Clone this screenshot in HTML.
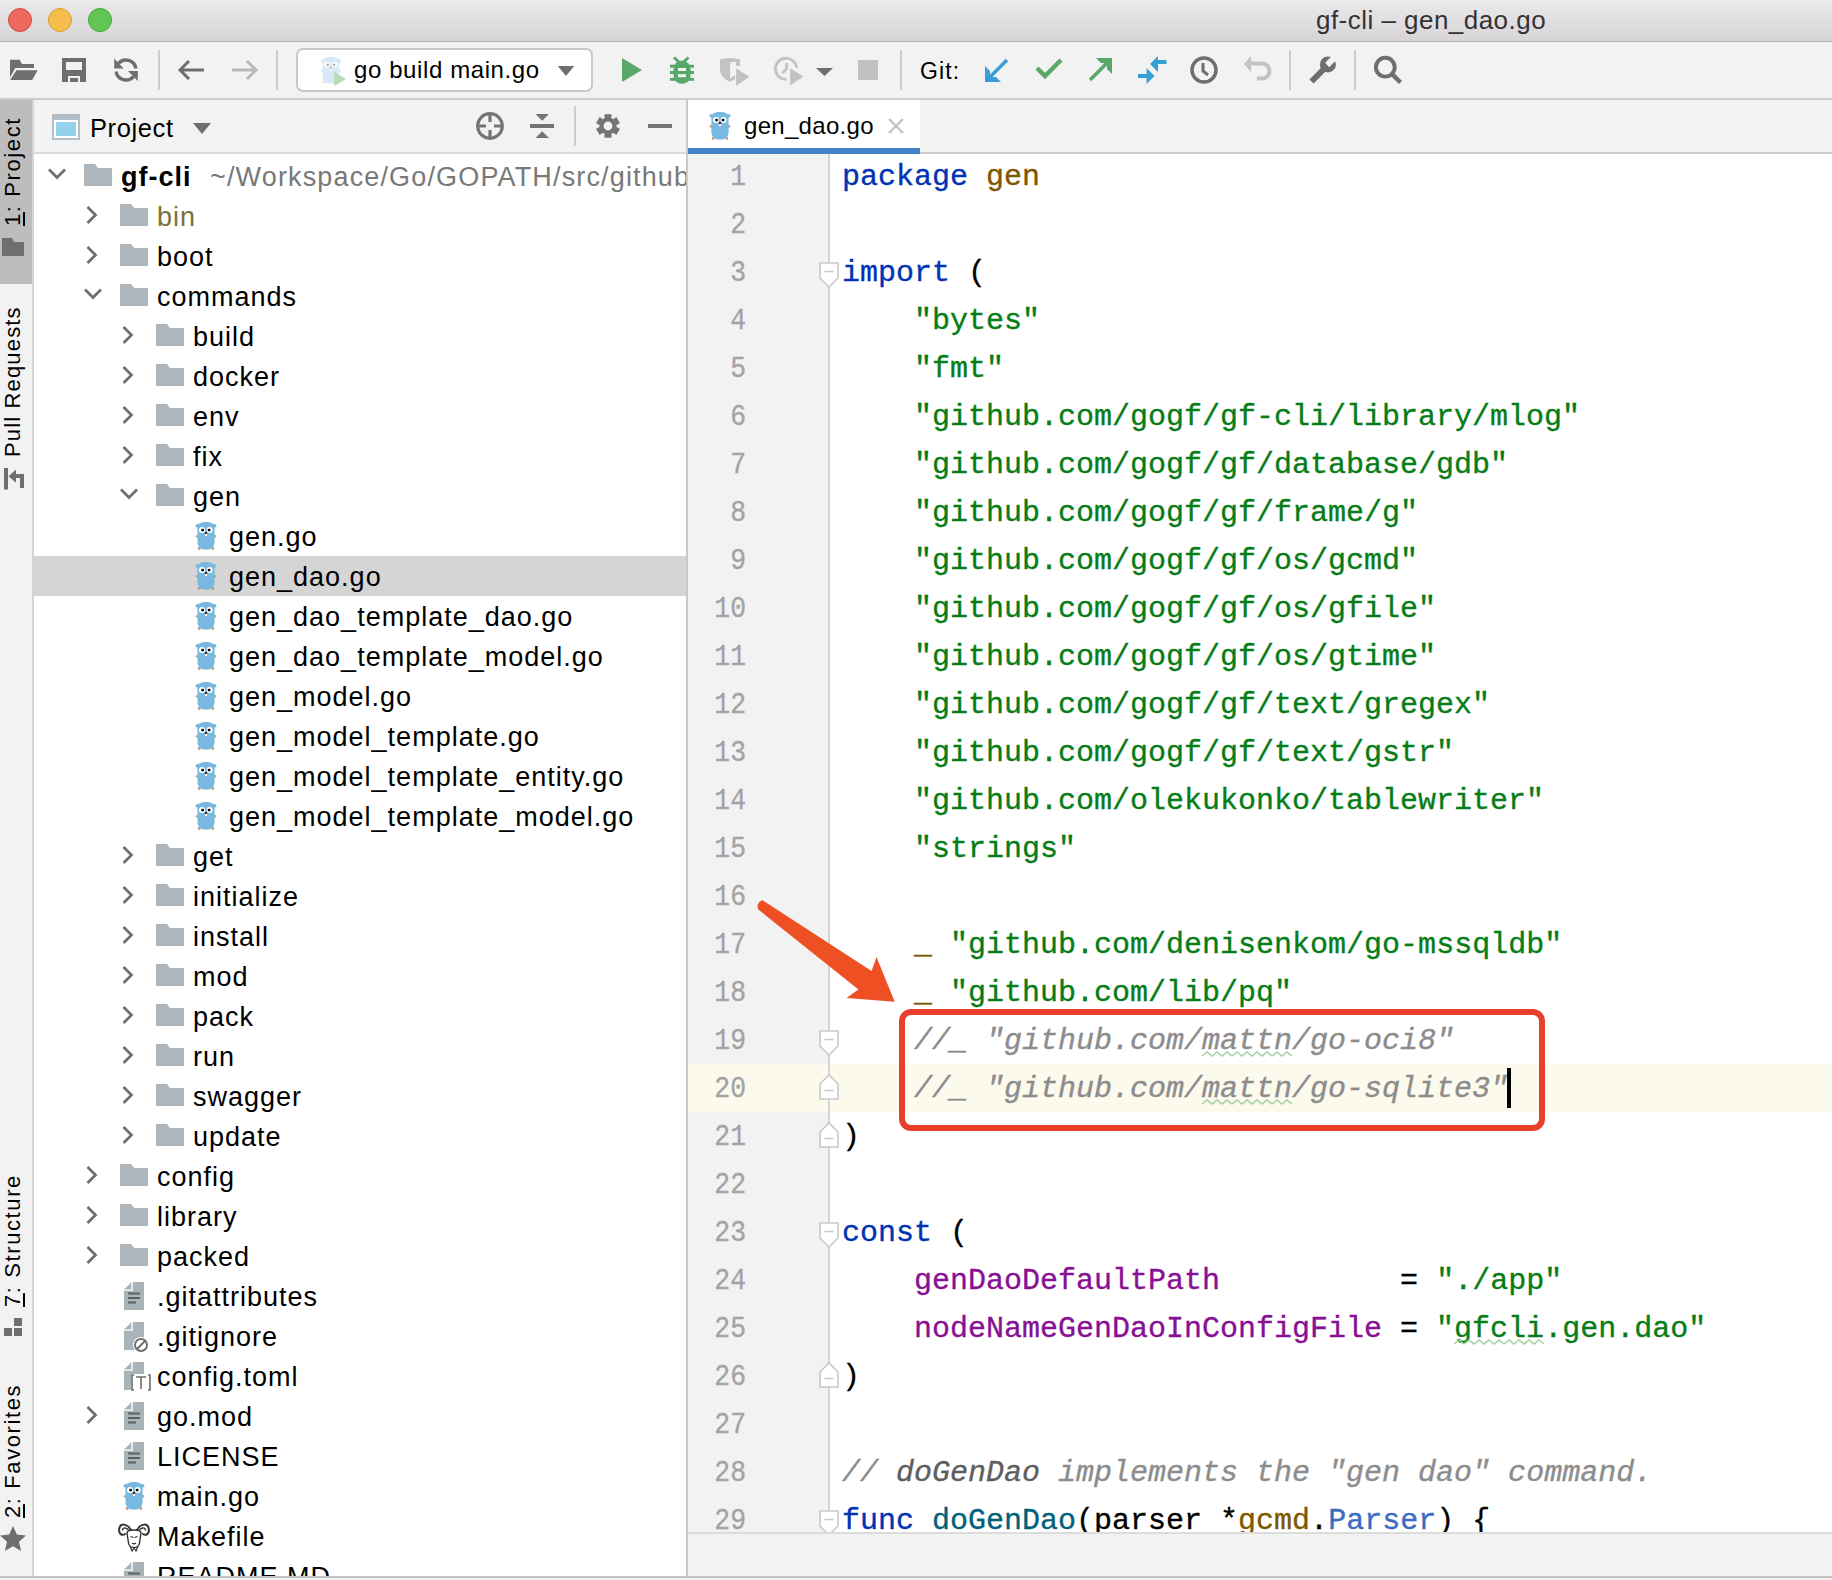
<!DOCTYPE html><html><head><meta charset="utf-8"><style>
*{box-sizing:border-box;margin:0;padding:0}
html,body{width:1832px;height:1580px;overflow:hidden;background:#f2f2f2;font-family:"Liberation Sans",sans-serif}
.a{position:absolute}
.ui{font-family:"Liberation Sans",sans-serif;white-space:pre}
.code{font-family:"Liberation Mono",monospace;font-size:30px;white-space:pre;line-height:48px;-webkit-text-stroke-width:0.35px}
.kw{color:#0033b3}.str{color:#067d17}.pkg{color:#7f5700}.cm{color:#8c8c8c;font-style:italic}
.cn{color:#871094}.fn{color:#00627a}.ty{color:#3a6cc2}
svg{position:absolute;overflow:visible}
</style></head><body>
<div class="a" style="left:0;top:0;width:1832px;height:41px;background:linear-gradient(#ebe9eb,#d6d4d6)"></div>
<div class="a" style="left:0;top:41px;width:1832px;height:1px;background:#b4b2b4"></div>
<div class="a" style="left:8px;top:8px;width:24px;height:24px;border-radius:50%;background:#ee6a5e;border:1px solid #d8473b"></div>
<div class="a" style="left:48px;top:8px;width:24px;height:24px;border-radius:50%;background:#f6be4f;border:1px solid #d99e2c"></div>
<div class="a" style="left:88px;top:8px;width:24px;height:24px;border-radius:50%;background:#62c655;border:1px solid #3ea934"></div>
<div class="a ui" style="left:1316px;top:5px;font-size:26px;color:#333;line-height:30px;letter-spacing:0.47px">gf-cli – gen_dao.go</div>
<div class="a" style="left:0;top:98px;width:1832px;height:2px;background:#cdcdcd"></div>
<div class="a" style="left:158px;top:50px;width:2px;height:40px;background:#cbcbcb"></div>
<div class="a" style="left:276px;top:50px;width:2px;height:40px;background:#cbcbcb"></div>
<div class="a" style="left:900px;top:50px;width:2px;height:40px;background:#cbcbcb"></div>
<div class="a" style="left:1289px;top:50px;width:2px;height:40px;background:#cbcbcb"></div>
<div class="a" style="left:1354px;top:50px;width:2px;height:40px;background:#cbcbcb"></div>
<svg style="left:10px;top:58px" width="30" height="24" viewBox="0 0 30 24"><path d="M0 1.8h9.5l2.5 4.2H24V10H5.2L0 19.5z" fill="#6e6e6e"/><path d="M6.4 12.3H27.7L22.2 22H0.2z" fill="#6e6e6e"/></svg>
<svg style="left:62px;top:58px" width="24" height="24" viewBox="0 0 24 24"><path fill-rule="evenodd" d="M0 0h24v24H0z M4 4v8h16V4z M6 18v6h12v-6z" fill="#6e6e6e"/><rect x="8" y="20" width="8" height="4" fill="#6e6e6e"/></svg>
<svg style="left:114px;top:58px" width="24" height="24" viewBox="0 0 24 24"><path d="M4.45 5.44A10 10 0 0 1 21.9 10.6" stroke="#6e6e6e" stroke-width="3.4" fill="none"/><path d="M19.55 18.56A10 10 0 0 1 2.1 13.4" stroke="#6e6e6e" stroke-width="3.4" fill="none"/><path d="M0.2 0.6v10h9.5z" fill="#6e6e6e"/><path d="M23.8 22.9V13.1H14z" fill="#6e6e6e"/></svg>
<svg style="left:178px;top:60px" width="26" height="20" viewBox="0 0 26 20"><path d="M26 10H3 M11 1L2 10l9 9" stroke="#6e6e6e" stroke-width="3" fill="none"/></svg>
<svg style="left:232px;top:60px" width="26" height="20" viewBox="0 0 26 20"><path d="M0 10h23 M15 1l9 9-9 9" stroke="#b9b9b9" stroke-width="3" fill="none"/></svg>
<div class="a" style="left:296px;top:48px;width:297px;height:44px;background:#fff;border:2px solid #c9c9c9;border-radius:7px"></div>
<div class="a ui" style="left:354px;top:55px;font-size:24px;color:#000;line-height:30px;letter-spacing:0.6px">go build main.go</div>
<svg style="left:557px;top:66px" width="18" height="10" viewBox="0 0 18 11"><path d="M0 0h18L9 11z" fill="#6e6e6e"/></svg>
<svg style="left:320px;top:56px;opacity:0.3" width="22" height="28" viewBox="0 0 22 29"><g fill="#c49a86"><circle cx="2.1" cy="15.3" r="1.4"/><circle cx="19.9" cy="15.3" r="1.4"/><circle cx="4.2" cy="27.3" r="1.5"/><circle cx="17.8" cy="27.3" r="1.5"/></g><circle cx="2.4" cy="4.8" r="1.9" fill="#78b9e2"/><circle cx="19.6" cy="4.8" r="1.9" fill="#78b9e2"/><path d="M2.4 6.5C2.4 2.5 6 0.9 11 0.9S19.6 2.5 19.6 6.5V20.5C19.6 26 16 28.7 11 28.7S2.4 26 2.4 20.5z" fill="#78b9e2"/><circle cx="7" cy="9" r="3" fill="#fff"/><circle cx="14.6" cy="9" r="3" fill="#fff"/><circle cx="7.6" cy="9.1" r="1.45" fill="#000"/><circle cx="14.1" cy="9.1" r="1.45" fill="#000"/><ellipse cx="11" cy="12.6" rx="1.9" ry="1.5" fill="#d7b7a6"/><ellipse cx="11" cy="11.9" rx="1.3" ry="1" fill="#1e1e1e"/><rect x="10" y="13.4" width="2" height="1.8" fill="#fff"/></svg>
<svg style="left:334px;top:72px" width="12" height="14" viewBox="0 0 12 14"><path d="M0 0l12 7-12 7z" fill="#b5dcb5"/></svg>
<svg style="left:622px;top:58px" width="20" height="24" viewBox="0 0 20 24"><path d="M0 0l20 12L0 24z" fill="#59a869"/></svg>
<svg style="left:668px;top:56px" width="28" height="30" viewBox="0 0 28 30"><path d="M6 1.5l6.5 6M20.5 1.5L14 7.5" stroke="#59a869" stroke-width="3"/><rect x="5.4" y="4.4" width="17.2" height="23.4" rx="8.6" ry="9" fill="#59a869"/><rect x="2" y="8.7" width="24" height="3" fill="#59a869"/><rect x="2" y="15" width="24" height="3" fill="#59a869"/><rect x="2" y="21.8" width="24" height="3" fill="#59a869"/><rect x="10" y="12" width="8" height="3" fill="#f2f2f2"/><rect x="10" y="18.2" width="8" height="3" fill="#f2f2f2"/></svg>
<svg style="left:719px;top:56px" width="32" height="32" viewBox="0 0 32 32"><path d="M1 3.5Q11 0.5 21 3.5V9.8H17V5.8L11.1 6.2V22.4L16 19V23.3L11 25.7Q2 22 1 14z" fill="#c2c2c2"/><path d="M17.1 12.3L30.2 20.7L17.1 29.8z" fill="#c2c2c2"/></svg>
<svg style="left:774px;top:56px" width="32" height="32" viewBox="0 0 32 32"><path d="M12.6 23.4A10.6 10.6 0 1 1 22.56 11.88" stroke="#c2c2c2" stroke-width="2.8" fill="none"/><path d="M12.6 7.1V12.8L8.5 17.1" stroke="#c2c2c2" stroke-width="2.8" fill="none"/><path d="M16.1 12.3L29.4 20.6L16.1 29.6z" fill="#c2c2c2"/></svg>
<svg style="left:815.5px;top:68px" width="17" height="8" viewBox="0 0 17 8"><path d="M0 0h17L8.5 8z" fill="#6e6e6e"/></svg>
<div class="a" style="left:858px;top:60px;width:20px;height:20px;background:#c2c2c2"></div>
<div class="a ui" style="left:920px;top:56px;font-size:23px;color:#000;line-height:30px;letter-spacing:1.1px">Git:</div>
<svg style="left:985px;top:58px" width="24" height="24" viewBox="0 0 24 24"><path d="M22 2L5 19" stroke="#389fd6" stroke-width="3.5"/><path d="M0 8v16h16l-5-5H5v-6z" fill="#389fd6"/></svg>
<svg style="left:1035px;top:57px" width="28" height="22" viewBox="0 0 28 22"><path d="M2 11l8 8L26 3" stroke="#59a869" stroke-width="4.5" fill="none"/></svg>
<svg style="left:1088px;top:58px" width="24" height="24" viewBox="0 0 24 24"><path d="M2 22L19 5" stroke="#59a869" stroke-width="3.5"/><path d="M8 0h16v16l-5-5V5h-6z" fill="#59a869"/></svg>
<svg style="left:1138px;top:56px" width="30" height="30" viewBox="0 0 30 30"><path d="M19 6h9.5" stroke="#389fd6" stroke-width="4"/><path d="M12 8l8-8v16z" fill="#389fd6"/><path d="M0 20h9.5" stroke="#389fd6" stroke-width="4"/><path d="M16.5 20l-8-8v16z" fill="#389fd6"/></svg>
<svg style="left:1190px;top:56px" width="28" height="28" viewBox="0 0 28 28"><circle cx="14" cy="14" r="12" stroke="#6e6e6e" stroke-width="3.5" fill="none"/><path d="M13 7v8l5 4" stroke="#6e6e6e" stroke-width="3" fill="none"/></svg>
<svg style="left:1244px;top:56px" width="28" height="26" viewBox="0 0 28 26"><path d="M6 7.5h12a7.5 7.5 0 0 1 0 15h-5" stroke="#c2c2c2" stroke-width="4" fill="none"/><path d="M0 8l7-8v16z" fill="#c2c2c2"/></svg>
<svg style="left:1309px;top:56px" width="30" height="30" viewBox="0 0 30 30"><path d="M2.5 25.5L15 13" stroke="#6e6e6e" stroke-width="6"/><circle cx="18.9" cy="8.4" r="8" fill="#6e6e6e"/><path d="M16.2 6.7L26.2 -3.3L30.1 1.2L20.1 11.2z" fill="#f2f2f2"/></svg>
<svg style="left:1374px;top:57px" width="30" height="30" viewBox="0 0 30 30"><circle cx="11.3" cy="10.2" r="9.4" stroke="#6e6e6e" stroke-width="3.9" fill="none"/><path d="M17.5 16.5L26.5 25.5" stroke="#6e6e6e" stroke-width="4.5"/></svg>
<div class="a" style="left:0;top:100px;width:32px;height:1476px;background:#f2f2f2"></div>
<div class="a" style="left:0;top:100px;width:32px;height:184px;background:#bdbdbd"></div>
<div class="a" style="left:32px;top:100px;width:2px;height:1476px;background:#d4d4d4"></div>
<div class="a ui" style="left:1px;top:226px;font-size:22px;line-height:24px;letter-spacing:1.6px;color:#000;transform-origin:0 0;transform:rotate(-90deg)"><u style="text-decoration-thickness:2px;text-underline-offset:3px">1</u>: Project</div>
<div class="a ui" style="left:1px;top:457px;font-size:22px;line-height:24px;letter-spacing:1.15px;color:#000;transform-origin:0 0;transform:rotate(-90deg)">Pull Requests</div>
<div class="a ui" style="left:1px;top:1307px;font-size:22px;line-height:24px;letter-spacing:1.6px;color:#000;transform-origin:0 0;transform:rotate(-90deg)"><u style="text-decoration-thickness:2px;text-underline-offset:3px">7</u>: Structure</div>
<div class="a ui" style="left:1px;top:1518px;font-size:22px;line-height:24px;letter-spacing:1.6px;color:#000;transform-origin:0 0;transform:rotate(-90deg)"><u style="text-decoration-thickness:2px;text-underline-offset:3px">2</u>: Favorites</div>
<svg style="left:2px;top:238px" width="22" height="18" viewBox="0 0 22 18"><path d="M0 0h10l2 4h10v14H0z" fill="#6e6e6e"/></svg>
<svg style="left:4px;top:468px" width="22" height="22" viewBox="0 0 22 22"><rect x="0" y="0" width="4" height="21.5" fill="#6e6e6e"/><path d="M4.6 8.2L12 1.5v13.3z" fill="#6e6e6e"/><path d="M11 8h7v12" stroke="#6e6e6e" stroke-width="4" fill="none"/></svg>
<svg style="left:4px;top:1318px" width="18" height="18" viewBox="0 0 18 18"><rect x="10" y="0" width="8" height="8" fill="#6e6e6e"/><rect x="0" y="10" width="8" height="8" fill="#6e6e6e"/><rect x="10" y="10" width="8" height="8" fill="#6e6e6e"/></svg>
<svg style="left:0px;top:1526px" width="26" height="25" viewBox="0 0 26 25"><path d="M13 0l3.8 8.6 9.2.9-7 6.2 2.1 9.3L13 20.2 4.9 25l2.1-9.3-7-6.2 9.2-.9z" fill="#6e6e6e"/></svg>
<div class="a" style="left:34px;top:100px;width:652px;height:52px;background:#f2f2f2"></div>
<div class="a" style="left:34px;top:152px;width:652px;height:2px;background:#d9d9d9"></div>
<div class="a" style="left:34px;top:154px;width:652px;height:1422px;background:#fff"></div>
<div class="a" style="left:686px;top:100px;width:2px;height:1476px;background:#c9c9c9"></div>
<div class="a" style="left:52px;top:114px;width:28px;height:26px;background:#b3bec6"></div>
<div class="a" style="left:54px;top:120px;width:24px;height:18px;background:#fff"></div>
<div class="a" style="left:56px;top:122px;width:20px;height:14px;background:#94d1ea"></div>
<div class="a ui" style="left:90px;top:112.5px;font-size:25.5px;line-height:30px;color:#000;letter-spacing:0.6px">Project</div>
<svg style="left:193px;top:123px" width="18" height="11" viewBox="0 0 18 11"><path d="M0 0h18L9 11z" fill="#6e6e6e"/></svg>
<svg style="left:476px;top:112px" width="28" height="28" viewBox="0 0 28 28"><circle cx="14" cy="14" r="12.3" stroke="#747474" stroke-width="3.2" fill="none"/><path d="M14 2v8M14 18v8M2 14h8M18 14h8" stroke="#747474" stroke-width="3.2"/></svg>
<svg style="left:530px;top:113px" width="24" height="26" viewBox="0 0 24 26"><path d="M0 13h24" stroke="#747474" stroke-width="4"/><path d="M5.5 1h13.5l-6.75 6.7z M5.5 25h13.5l-6.75-6.7z" fill="#747474"/></svg>
<div class="a" style="left:574px;top:106px;width:2px;height:40px;background:#cbcbcb"></div>
<svg style="left:594px;top:112px" width="28" height="28" viewBox="0 0 28 28"><path fill="#747474" fill-rule="evenodd" d="M10.40 2.24 L17.60 2.24 L17.36 6.08 L19.18 7.13 L22.39 5.00 L25.98 11.23 L22.54 12.95 L22.54 15.05 L25.98 16.77 L22.39 23.00 L19.18 20.87 L17.36 21.92 L17.60 25.76 L10.40 25.76 L10.64 21.92 L8.82 20.87 L5.61 23.00 L2.02 16.77 L5.46 15.05 L5.46 12.95 L2.02 11.23 L5.61 5.00 L8.82 7.13 L10.64 6.08z M18.4 14a4.4 4.4 0 1 0 -8.8 0a4.4 4.4 0 1 0 8.8 0z"/></svg>
<div class="a" style="left:648px;top:124px;width:24px;height:4px;background:#747474"></div>
<div class="a" style="left:34px;top:154px;width:652px;height:1422px;overflow:hidden">
<svg style="left:13.5px;top:14px" width="18" height="12" viewBox="0 0 18 12"><path d="M1 1.5l8 8 8-8" stroke="#6f6f6f" stroke-width="2.7" fill="none"/></svg>
<svg style="left:50px;top:10px" width="28" height="22" viewBox="0 0 28 22"><path d="M0 0h11l3 4h14v18H0z" fill="#aeb6bd"/></svg>
<div class="a ui" style="left:87px;top:8px;font-size:27px;line-height:30px;color:#000;font-weight:bold;letter-spacing:1px">gf-cli</div>
<div class="a ui" style="left:176px;top:8px;font-size:27px;line-height:30px;color:#787878;letter-spacing:1.15px">~/Workspace/Go/GOPATH/src/github.com/gogf/gf-cli</div>
<svg style="left:52.0px;top:52px" width="12" height="18" viewBox="0 0 12 18"><path d="M1.5 1l8 8-8 8" stroke="#6f6f6f" stroke-width="2.7" fill="none"/></svg>
<svg style="left:86px;top:50px" width="28" height="22" viewBox="0 0 28 22"><path d="M0 0h11l3 4h14v18H0z" fill="#aeb6bd"/></svg>
<div class="a ui" style="left:123px;top:48px;font-size:27px;line-height:30px;color:#777236;font-weight:normal;letter-spacing:1px">bin</div>
<svg style="left:52.0px;top:92px" width="12" height="18" viewBox="0 0 12 18"><path d="M1.5 1l8 8-8 8" stroke="#6f6f6f" stroke-width="2.7" fill="none"/></svg>
<svg style="left:86px;top:90px" width="28" height="22" viewBox="0 0 28 22"><path d="M0 0h11l3 4h14v18H0z" fill="#aeb6bd"/></svg>
<div class="a ui" style="left:123px;top:88px;font-size:27px;line-height:30px;color:#000;font-weight:normal;letter-spacing:1px">boot</div>
<svg style="left:49.5px;top:134px" width="18" height="12" viewBox="0 0 18 12"><path d="M1 1.5l8 8 8-8" stroke="#6f6f6f" stroke-width="2.7" fill="none"/></svg>
<svg style="left:86px;top:130px" width="28" height="22" viewBox="0 0 28 22"><path d="M0 0h11l3 4h14v18H0z" fill="#aeb6bd"/></svg>
<div class="a ui" style="left:123px;top:128px;font-size:27px;line-height:30px;color:#000;font-weight:normal;letter-spacing:1px">commands</div>
<svg style="left:88.0px;top:172px" width="12" height="18" viewBox="0 0 12 18"><path d="M1.5 1l8 8-8 8" stroke="#6f6f6f" stroke-width="2.7" fill="none"/></svg>
<svg style="left:122px;top:170px" width="28" height="22" viewBox="0 0 28 22"><path d="M0 0h11l3 4h14v18H0z" fill="#aeb6bd"/></svg>
<div class="a ui" style="left:159px;top:168px;font-size:27px;line-height:30px;color:#000;font-weight:normal;letter-spacing:1px">build</div>
<svg style="left:88.0px;top:212px" width="12" height="18" viewBox="0 0 12 18"><path d="M1.5 1l8 8-8 8" stroke="#6f6f6f" stroke-width="2.7" fill="none"/></svg>
<svg style="left:122px;top:210px" width="28" height="22" viewBox="0 0 28 22"><path d="M0 0h11l3 4h14v18H0z" fill="#aeb6bd"/></svg>
<div class="a ui" style="left:159px;top:208px;font-size:27px;line-height:30px;color:#000;font-weight:normal;letter-spacing:1px">docker</div>
<svg style="left:88.0px;top:252px" width="12" height="18" viewBox="0 0 12 18"><path d="M1.5 1l8 8-8 8" stroke="#6f6f6f" stroke-width="2.7" fill="none"/></svg>
<svg style="left:122px;top:250px" width="28" height="22" viewBox="0 0 28 22"><path d="M0 0h11l3 4h14v18H0z" fill="#aeb6bd"/></svg>
<div class="a ui" style="left:159px;top:248px;font-size:27px;line-height:30px;color:#000;font-weight:normal;letter-spacing:1px">env</div>
<svg style="left:88.0px;top:292px" width="12" height="18" viewBox="0 0 12 18"><path d="M1.5 1l8 8-8 8" stroke="#6f6f6f" stroke-width="2.7" fill="none"/></svg>
<svg style="left:122px;top:290px" width="28" height="22" viewBox="0 0 28 22"><path d="M0 0h11l3 4h14v18H0z" fill="#aeb6bd"/></svg>
<div class="a ui" style="left:159px;top:288px;font-size:27px;line-height:30px;color:#000;font-weight:normal;letter-spacing:1px">fix</div>
<svg style="left:85.5px;top:334px" width="18" height="12" viewBox="0 0 18 12"><path d="M1 1.5l8 8 8-8" stroke="#6f6f6f" stroke-width="2.7" fill="none"/></svg>
<svg style="left:122px;top:330px" width="28" height="22" viewBox="0 0 28 22"><path d="M0 0h11l3 4h14v18H0z" fill="#aeb6bd"/></svg>
<div class="a ui" style="left:159px;top:328px;font-size:27px;line-height:30px;color:#000;font-weight:normal;letter-spacing:1px">gen</div>
<svg style="left:161px;top:367px;opacity:1.0" width="22" height="29" viewBox="0 0 22 29"><g fill="#c49a86"><circle cx="2.1" cy="15.3" r="1.4"/><circle cx="19.9" cy="15.3" r="1.4"/><circle cx="4.2" cy="27.3" r="1.5"/><circle cx="17.8" cy="27.3" r="1.5"/></g><circle cx="2.4" cy="4.8" r="1.9" fill="#78b9e2"/><circle cx="19.6" cy="4.8" r="1.9" fill="#78b9e2"/><path d="M2.4 6.5C2.4 2.5 6 0.9 11 0.9S19.6 2.5 19.6 6.5V20.5C19.6 26 16 28.7 11 28.7S2.4 26 2.4 20.5z" fill="#78b9e2"/><circle cx="7" cy="9" r="3" fill="#fff"/><circle cx="14.6" cy="9" r="3" fill="#fff"/><circle cx="7.6" cy="9.1" r="1.45" fill="#000"/><circle cx="14.1" cy="9.1" r="1.45" fill="#000"/><ellipse cx="11" cy="12.6" rx="1.9" ry="1.5" fill="#d7b7a6"/><ellipse cx="11" cy="11.9" rx="1.3" ry="1" fill="#1e1e1e"/><rect x="10" y="13.4" width="2" height="1.8" fill="#fff"/></svg>
<div class="a ui" style="left:195px;top:368px;font-size:27px;line-height:30px;color:#000;font-weight:normal;letter-spacing:1px">gen.go</div>
<div class="a" style="left:0;top:402px;width:652px;height:40px;background:#d5d5d5"></div>
<svg style="left:161px;top:407px;opacity:1.0" width="22" height="29" viewBox="0 0 22 29"><g fill="#c49a86"><circle cx="2.1" cy="15.3" r="1.4"/><circle cx="19.9" cy="15.3" r="1.4"/><circle cx="4.2" cy="27.3" r="1.5"/><circle cx="17.8" cy="27.3" r="1.5"/></g><circle cx="2.4" cy="4.8" r="1.9" fill="#78b9e2"/><circle cx="19.6" cy="4.8" r="1.9" fill="#78b9e2"/><path d="M2.4 6.5C2.4 2.5 6 0.9 11 0.9S19.6 2.5 19.6 6.5V20.5C19.6 26 16 28.7 11 28.7S2.4 26 2.4 20.5z" fill="#78b9e2"/><circle cx="7" cy="9" r="3" fill="#fff"/><circle cx="14.6" cy="9" r="3" fill="#fff"/><circle cx="7.6" cy="9.1" r="1.45" fill="#000"/><circle cx="14.1" cy="9.1" r="1.45" fill="#000"/><ellipse cx="11" cy="12.6" rx="1.9" ry="1.5" fill="#d7b7a6"/><ellipse cx="11" cy="11.9" rx="1.3" ry="1" fill="#1e1e1e"/><rect x="10" y="13.4" width="2" height="1.8" fill="#fff"/></svg>
<div class="a ui" style="left:195px;top:408px;font-size:27px;line-height:30px;color:#000;font-weight:normal;letter-spacing:1px">gen_dao.go</div>
<svg style="left:161px;top:447px;opacity:1.0" width="22" height="29" viewBox="0 0 22 29"><g fill="#c49a86"><circle cx="2.1" cy="15.3" r="1.4"/><circle cx="19.9" cy="15.3" r="1.4"/><circle cx="4.2" cy="27.3" r="1.5"/><circle cx="17.8" cy="27.3" r="1.5"/></g><circle cx="2.4" cy="4.8" r="1.9" fill="#78b9e2"/><circle cx="19.6" cy="4.8" r="1.9" fill="#78b9e2"/><path d="M2.4 6.5C2.4 2.5 6 0.9 11 0.9S19.6 2.5 19.6 6.5V20.5C19.6 26 16 28.7 11 28.7S2.4 26 2.4 20.5z" fill="#78b9e2"/><circle cx="7" cy="9" r="3" fill="#fff"/><circle cx="14.6" cy="9" r="3" fill="#fff"/><circle cx="7.6" cy="9.1" r="1.45" fill="#000"/><circle cx="14.1" cy="9.1" r="1.45" fill="#000"/><ellipse cx="11" cy="12.6" rx="1.9" ry="1.5" fill="#d7b7a6"/><ellipse cx="11" cy="11.9" rx="1.3" ry="1" fill="#1e1e1e"/><rect x="10" y="13.4" width="2" height="1.8" fill="#fff"/></svg>
<div class="a ui" style="left:195px;top:448px;font-size:27px;line-height:30px;color:#000;font-weight:normal;letter-spacing:1px">gen_dao_template_dao.go</div>
<svg style="left:161px;top:487px;opacity:1.0" width="22" height="29" viewBox="0 0 22 29"><g fill="#c49a86"><circle cx="2.1" cy="15.3" r="1.4"/><circle cx="19.9" cy="15.3" r="1.4"/><circle cx="4.2" cy="27.3" r="1.5"/><circle cx="17.8" cy="27.3" r="1.5"/></g><circle cx="2.4" cy="4.8" r="1.9" fill="#78b9e2"/><circle cx="19.6" cy="4.8" r="1.9" fill="#78b9e2"/><path d="M2.4 6.5C2.4 2.5 6 0.9 11 0.9S19.6 2.5 19.6 6.5V20.5C19.6 26 16 28.7 11 28.7S2.4 26 2.4 20.5z" fill="#78b9e2"/><circle cx="7" cy="9" r="3" fill="#fff"/><circle cx="14.6" cy="9" r="3" fill="#fff"/><circle cx="7.6" cy="9.1" r="1.45" fill="#000"/><circle cx="14.1" cy="9.1" r="1.45" fill="#000"/><ellipse cx="11" cy="12.6" rx="1.9" ry="1.5" fill="#d7b7a6"/><ellipse cx="11" cy="11.9" rx="1.3" ry="1" fill="#1e1e1e"/><rect x="10" y="13.4" width="2" height="1.8" fill="#fff"/></svg>
<div class="a ui" style="left:195px;top:488px;font-size:27px;line-height:30px;color:#000;font-weight:normal;letter-spacing:1px">gen_dao_template_model.go</div>
<svg style="left:161px;top:527px;opacity:1.0" width="22" height="29" viewBox="0 0 22 29"><g fill="#c49a86"><circle cx="2.1" cy="15.3" r="1.4"/><circle cx="19.9" cy="15.3" r="1.4"/><circle cx="4.2" cy="27.3" r="1.5"/><circle cx="17.8" cy="27.3" r="1.5"/></g><circle cx="2.4" cy="4.8" r="1.9" fill="#78b9e2"/><circle cx="19.6" cy="4.8" r="1.9" fill="#78b9e2"/><path d="M2.4 6.5C2.4 2.5 6 0.9 11 0.9S19.6 2.5 19.6 6.5V20.5C19.6 26 16 28.7 11 28.7S2.4 26 2.4 20.5z" fill="#78b9e2"/><circle cx="7" cy="9" r="3" fill="#fff"/><circle cx="14.6" cy="9" r="3" fill="#fff"/><circle cx="7.6" cy="9.1" r="1.45" fill="#000"/><circle cx="14.1" cy="9.1" r="1.45" fill="#000"/><ellipse cx="11" cy="12.6" rx="1.9" ry="1.5" fill="#d7b7a6"/><ellipse cx="11" cy="11.9" rx="1.3" ry="1" fill="#1e1e1e"/><rect x="10" y="13.4" width="2" height="1.8" fill="#fff"/></svg>
<div class="a ui" style="left:195px;top:528px;font-size:27px;line-height:30px;color:#000;font-weight:normal;letter-spacing:1px">gen_model.go</div>
<svg style="left:161px;top:567px;opacity:1.0" width="22" height="29" viewBox="0 0 22 29"><g fill="#c49a86"><circle cx="2.1" cy="15.3" r="1.4"/><circle cx="19.9" cy="15.3" r="1.4"/><circle cx="4.2" cy="27.3" r="1.5"/><circle cx="17.8" cy="27.3" r="1.5"/></g><circle cx="2.4" cy="4.8" r="1.9" fill="#78b9e2"/><circle cx="19.6" cy="4.8" r="1.9" fill="#78b9e2"/><path d="M2.4 6.5C2.4 2.5 6 0.9 11 0.9S19.6 2.5 19.6 6.5V20.5C19.6 26 16 28.7 11 28.7S2.4 26 2.4 20.5z" fill="#78b9e2"/><circle cx="7" cy="9" r="3" fill="#fff"/><circle cx="14.6" cy="9" r="3" fill="#fff"/><circle cx="7.6" cy="9.1" r="1.45" fill="#000"/><circle cx="14.1" cy="9.1" r="1.45" fill="#000"/><ellipse cx="11" cy="12.6" rx="1.9" ry="1.5" fill="#d7b7a6"/><ellipse cx="11" cy="11.9" rx="1.3" ry="1" fill="#1e1e1e"/><rect x="10" y="13.4" width="2" height="1.8" fill="#fff"/></svg>
<div class="a ui" style="left:195px;top:568px;font-size:27px;line-height:30px;color:#000;font-weight:normal;letter-spacing:1px">gen_model_template.go</div>
<svg style="left:161px;top:607px;opacity:1.0" width="22" height="29" viewBox="0 0 22 29"><g fill="#c49a86"><circle cx="2.1" cy="15.3" r="1.4"/><circle cx="19.9" cy="15.3" r="1.4"/><circle cx="4.2" cy="27.3" r="1.5"/><circle cx="17.8" cy="27.3" r="1.5"/></g><circle cx="2.4" cy="4.8" r="1.9" fill="#78b9e2"/><circle cx="19.6" cy="4.8" r="1.9" fill="#78b9e2"/><path d="M2.4 6.5C2.4 2.5 6 0.9 11 0.9S19.6 2.5 19.6 6.5V20.5C19.6 26 16 28.7 11 28.7S2.4 26 2.4 20.5z" fill="#78b9e2"/><circle cx="7" cy="9" r="3" fill="#fff"/><circle cx="14.6" cy="9" r="3" fill="#fff"/><circle cx="7.6" cy="9.1" r="1.45" fill="#000"/><circle cx="14.1" cy="9.1" r="1.45" fill="#000"/><ellipse cx="11" cy="12.6" rx="1.9" ry="1.5" fill="#d7b7a6"/><ellipse cx="11" cy="11.9" rx="1.3" ry="1" fill="#1e1e1e"/><rect x="10" y="13.4" width="2" height="1.8" fill="#fff"/></svg>
<div class="a ui" style="left:195px;top:608px;font-size:27px;line-height:30px;color:#000;font-weight:normal;letter-spacing:1px">gen_model_template_entity.go</div>
<svg style="left:161px;top:647px;opacity:1.0" width="22" height="29" viewBox="0 0 22 29"><g fill="#c49a86"><circle cx="2.1" cy="15.3" r="1.4"/><circle cx="19.9" cy="15.3" r="1.4"/><circle cx="4.2" cy="27.3" r="1.5"/><circle cx="17.8" cy="27.3" r="1.5"/></g><circle cx="2.4" cy="4.8" r="1.9" fill="#78b9e2"/><circle cx="19.6" cy="4.8" r="1.9" fill="#78b9e2"/><path d="M2.4 6.5C2.4 2.5 6 0.9 11 0.9S19.6 2.5 19.6 6.5V20.5C19.6 26 16 28.7 11 28.7S2.4 26 2.4 20.5z" fill="#78b9e2"/><circle cx="7" cy="9" r="3" fill="#fff"/><circle cx="14.6" cy="9" r="3" fill="#fff"/><circle cx="7.6" cy="9.1" r="1.45" fill="#000"/><circle cx="14.1" cy="9.1" r="1.45" fill="#000"/><ellipse cx="11" cy="12.6" rx="1.9" ry="1.5" fill="#d7b7a6"/><ellipse cx="11" cy="11.9" rx="1.3" ry="1" fill="#1e1e1e"/><rect x="10" y="13.4" width="2" height="1.8" fill="#fff"/></svg>
<div class="a ui" style="left:195px;top:648px;font-size:27px;line-height:30px;color:#000;font-weight:normal;letter-spacing:1px">gen_model_template_model.go</div>
<svg style="left:88.0px;top:692px" width="12" height="18" viewBox="0 0 12 18"><path d="M1.5 1l8 8-8 8" stroke="#6f6f6f" stroke-width="2.7" fill="none"/></svg>
<svg style="left:122px;top:690px" width="28" height="22" viewBox="0 0 28 22"><path d="M0 0h11l3 4h14v18H0z" fill="#aeb6bd"/></svg>
<div class="a ui" style="left:159px;top:688px;font-size:27px;line-height:30px;color:#000;font-weight:normal;letter-spacing:1px">get</div>
<svg style="left:88.0px;top:732px" width="12" height="18" viewBox="0 0 12 18"><path d="M1.5 1l8 8-8 8" stroke="#6f6f6f" stroke-width="2.7" fill="none"/></svg>
<svg style="left:122px;top:730px" width="28" height="22" viewBox="0 0 28 22"><path d="M0 0h11l3 4h14v18H0z" fill="#aeb6bd"/></svg>
<div class="a ui" style="left:159px;top:728px;font-size:27px;line-height:30px;color:#000;font-weight:normal;letter-spacing:1px">initialize</div>
<svg style="left:88.0px;top:772px" width="12" height="18" viewBox="0 0 12 18"><path d="M1.5 1l8 8-8 8" stroke="#6f6f6f" stroke-width="2.7" fill="none"/></svg>
<svg style="left:122px;top:770px" width="28" height="22" viewBox="0 0 28 22"><path d="M0 0h11l3 4h14v18H0z" fill="#aeb6bd"/></svg>
<div class="a ui" style="left:159px;top:768px;font-size:27px;line-height:30px;color:#000;font-weight:normal;letter-spacing:1px">install</div>
<svg style="left:88.0px;top:812px" width="12" height="18" viewBox="0 0 12 18"><path d="M1.5 1l8 8-8 8" stroke="#6f6f6f" stroke-width="2.7" fill="none"/></svg>
<svg style="left:122px;top:810px" width="28" height="22" viewBox="0 0 28 22"><path d="M0 0h11l3 4h14v18H0z" fill="#aeb6bd"/></svg>
<div class="a ui" style="left:159px;top:808px;font-size:27px;line-height:30px;color:#000;font-weight:normal;letter-spacing:1px">mod</div>
<svg style="left:88.0px;top:852px" width="12" height="18" viewBox="0 0 12 18"><path d="M1.5 1l8 8-8 8" stroke="#6f6f6f" stroke-width="2.7" fill="none"/></svg>
<svg style="left:122px;top:850px" width="28" height="22" viewBox="0 0 28 22"><path d="M0 0h11l3 4h14v18H0z" fill="#aeb6bd"/></svg>
<div class="a ui" style="left:159px;top:848px;font-size:27px;line-height:30px;color:#000;font-weight:normal;letter-spacing:1px">pack</div>
<svg style="left:88.0px;top:892px" width="12" height="18" viewBox="0 0 12 18"><path d="M1.5 1l8 8-8 8" stroke="#6f6f6f" stroke-width="2.7" fill="none"/></svg>
<svg style="left:122px;top:890px" width="28" height="22" viewBox="0 0 28 22"><path d="M0 0h11l3 4h14v18H0z" fill="#aeb6bd"/></svg>
<div class="a ui" style="left:159px;top:888px;font-size:27px;line-height:30px;color:#000;font-weight:normal;letter-spacing:1px">run</div>
<svg style="left:88.0px;top:932px" width="12" height="18" viewBox="0 0 12 18"><path d="M1.5 1l8 8-8 8" stroke="#6f6f6f" stroke-width="2.7" fill="none"/></svg>
<svg style="left:122px;top:930px" width="28" height="22" viewBox="0 0 28 22"><path d="M0 0h11l3 4h14v18H0z" fill="#aeb6bd"/></svg>
<div class="a ui" style="left:159px;top:928px;font-size:27px;line-height:30px;color:#000;font-weight:normal;letter-spacing:1px">swagger</div>
<svg style="left:88.0px;top:972px" width="12" height="18" viewBox="0 0 12 18"><path d="M1.5 1l8 8-8 8" stroke="#6f6f6f" stroke-width="2.7" fill="none"/></svg>
<svg style="left:122px;top:970px" width="28" height="22" viewBox="0 0 28 22"><path d="M0 0h11l3 4h14v18H0z" fill="#aeb6bd"/></svg>
<div class="a ui" style="left:159px;top:968px;font-size:27px;line-height:30px;color:#000;font-weight:normal;letter-spacing:1px">update</div>
<svg style="left:52.0px;top:1012px" width="12" height="18" viewBox="0 0 12 18"><path d="M1.5 1l8 8-8 8" stroke="#6f6f6f" stroke-width="2.7" fill="none"/></svg>
<svg style="left:86px;top:1010px" width="28" height="22" viewBox="0 0 28 22"><path d="M0 0h11l3 4h14v18H0z" fill="#aeb6bd"/></svg>
<div class="a ui" style="left:123px;top:1008px;font-size:27px;line-height:30px;color:#000;font-weight:normal;letter-spacing:1px">config</div>
<svg style="left:52.0px;top:1052px" width="12" height="18" viewBox="0 0 12 18"><path d="M1.5 1l8 8-8 8" stroke="#6f6f6f" stroke-width="2.7" fill="none"/></svg>
<svg style="left:86px;top:1050px" width="28" height="22" viewBox="0 0 28 22"><path d="M0 0h11l3 4h14v18H0z" fill="#aeb6bd"/></svg>
<div class="a ui" style="left:123px;top:1048px;font-size:27px;line-height:30px;color:#000;font-weight:normal;letter-spacing:1px">library</div>
<svg style="left:52.0px;top:1092px" width="12" height="18" viewBox="0 0 12 18"><path d="M1.5 1l8 8-8 8" stroke="#6f6f6f" stroke-width="2.7" fill="none"/></svg>
<svg style="left:86px;top:1090px" width="28" height="22" viewBox="0 0 28 22"><path d="M0 0h11l3 4h14v18H0z" fill="#aeb6bd"/></svg>
<div class="a ui" style="left:123px;top:1088px;font-size:27px;line-height:30px;color:#000;font-weight:normal;letter-spacing:1px">packed</div>
<svg style="left:90px;top:1128px" width="26" height="30" viewBox="0 0 26 30"><path d="M8 0H20V28H0V8z" fill="#a9b3ba"/><path d="M8 0V8H0" stroke="#fff" stroke-width="1.5" fill="none"/><path d="M0.4 7.2L7.2 0.4V7.2z" fill="#a9b3ba"/><path d="M4 11.5h12M4 16h12M4 20.5h8" stroke="#5f5f5f" stroke-width="2"/></svg>
<div class="a ui" style="left:123px;top:1128px;font-size:27px;line-height:30px;color:#000;font-weight:normal;letter-spacing:1px">.gitattributes</div>
<svg style="left:90px;top:1168px" width="26" height="30" viewBox="0 0 26 30"><path d="M8 0H20V28H0V8z" fill="#a9b3ba"/><path d="M8 0V8H0" stroke="#fff" stroke-width="1.5" fill="none"/><path d="M0.4 7.2L7.2 0.4V7.2z" fill="#a9b3ba"/><circle cx="17" cy="23" r="8" fill="#fff"/><circle cx="17" cy="23" r="6" stroke="#6e6e6e" stroke-width="2" fill="none"/><path d="M13 27l8-8" stroke="#6e6e6e" stroke-width="2"/></svg>
<div class="a ui" style="left:123px;top:1168px;font-size:27px;line-height:30px;color:#000;font-weight:normal;letter-spacing:1px">.gitignore</div>
<svg style="left:90px;top:1208px" width="26" height="30" viewBox="0 0 26 30"><path d="M8 0H20V28H0V8z" fill="#a9b3ba"/><path d="M8 0V8H0" stroke="#fff" stroke-width="1.5" fill="none"/><path d="M0.4 7.2L7.2 0.4V7.2z" fill="#a9b3ba"/><rect x="7" y="12" width="19" height="18" fill="#fff"/><path d="M10 13h-2v15h2M24 13h2v15h-2M12 15h10M17 15v12" stroke="#6e6e6e" stroke-width="1.6" fill="none"/></svg>
<div class="a ui" style="left:123px;top:1208px;font-size:27px;line-height:30px;color:#000;font-weight:normal;letter-spacing:1px">config.toml</div>
<svg style="left:52.0px;top:1252px" width="12" height="18" viewBox="0 0 12 18"><path d="M1.5 1l8 8-8 8" stroke="#6f6f6f" stroke-width="2.7" fill="none"/></svg>
<svg style="left:90px;top:1248px" width="26" height="30" viewBox="0 0 26 30"><path d="M8 0H20V28H0V8z" fill="#a9b3ba"/><path d="M8 0V8H0" stroke="#fff" stroke-width="1.5" fill="none"/><path d="M0.4 7.2L7.2 0.4V7.2z" fill="#a9b3ba"/><path d="M4 11.5h12M4 16h12M4 20.5h8" stroke="#5f5f5f" stroke-width="2"/></svg>
<div class="a ui" style="left:123px;top:1248px;font-size:27px;line-height:30px;color:#000;font-weight:normal;letter-spacing:1px">go.mod</div>
<svg style="left:90px;top:1288px" width="26" height="30" viewBox="0 0 26 30"><path d="M8 0H20V28H0V8z" fill="#a9b3ba"/><path d="M8 0V8H0" stroke="#fff" stroke-width="1.5" fill="none"/><path d="M0.4 7.2L7.2 0.4V7.2z" fill="#a9b3ba"/><path d="M4 11.5h12M4 16h12M4 20.5h8" stroke="#5f5f5f" stroke-width="2"/></svg>
<div class="a ui" style="left:123px;top:1288px;font-size:27px;line-height:30px;color:#000;font-weight:normal;letter-spacing:1px">LICENSE</div>
<svg style="left:89px;top:1327px;opacity:1.0" width="22" height="29" viewBox="0 0 22 29"><g fill="#c49a86"><circle cx="2.1" cy="15.3" r="1.4"/><circle cx="19.9" cy="15.3" r="1.4"/><circle cx="4.2" cy="27.3" r="1.5"/><circle cx="17.8" cy="27.3" r="1.5"/></g><circle cx="2.4" cy="4.8" r="1.9" fill="#78b9e2"/><circle cx="19.6" cy="4.8" r="1.9" fill="#78b9e2"/><path d="M2.4 6.5C2.4 2.5 6 0.9 11 0.9S19.6 2.5 19.6 6.5V20.5C19.6 26 16 28.7 11 28.7S2.4 26 2.4 20.5z" fill="#78b9e2"/><circle cx="7" cy="9" r="3" fill="#fff"/><circle cx="14.6" cy="9" r="3" fill="#fff"/><circle cx="7.6" cy="9.1" r="1.45" fill="#000"/><circle cx="14.1" cy="9.1" r="1.45" fill="#000"/><ellipse cx="11" cy="12.6" rx="1.9" ry="1.5" fill="#d7b7a6"/><ellipse cx="11" cy="11.9" rx="1.3" ry="1" fill="#1e1e1e"/><rect x="10" y="13.4" width="2" height="1.8" fill="#fff"/></svg>
<div class="a ui" style="left:123px;top:1328px;font-size:27px;line-height:30px;color:#000;font-weight:normal;letter-spacing:1px">main.go</div>
<svg style="left:84px;top:1366px" width="32" height="32" viewBox="0 0 32 32"><g fill="none" stroke="#333" stroke-width="2" stroke-linecap="round"><path d="M13 10C9 3 2 3 1.2 9C0.5 14 4 16 7 14"/><path d="M19 10C23 3 30 3 30.8 9C31.5 14 28 16 25 14"/><path d="M12 12C9 7 5 7 4.5 10" stroke-width="1.3"/><path d="M20 12C23 7 27 7 27.5 10" stroke-width="1.3"/></g><path d="M9 13C9 9 23 9 23 13L21.5 23C20.5 29 11.5 29 10.5 23z" fill="#fff" stroke="#333" stroke-width="1.4"/><path d="M12.5 16.5l3 1M19.5 16.5l-3 1M14 23c1.3 1 2.7 1 4 0M12 26l2 5 2-3 2 3 2-5" stroke="#333" stroke-width="1.2" fill="none"/></svg>
<div class="a ui" style="left:123px;top:1368px;font-size:27px;line-height:30px;color:#000;font-weight:normal;letter-spacing:1px">Makefile</div>
<svg style="left:90px;top:1408px" width="26" height="30" viewBox="0 0 26 30"><path d="M8 0H20V28H0V8z" fill="#a9b3ba"/><path d="M8 0V8H0" stroke="#fff" stroke-width="1.5" fill="none"/><path d="M0.4 7.2L7.2 0.4V7.2z" fill="#a9b3ba"/><path d="M4 11.5h12M4 16h12M4 20.5h8" stroke="#5f5f5f" stroke-width="2"/></svg>
<div class="a ui" style="left:123px;top:1408px;font-size:27px;line-height:30px;color:#000;font-weight:normal;letter-spacing:1px">README.MD</div>
</div>
<div class="a" style="left:688px;top:100px;width:1144px;height:52px;background:#f2f2f2"></div>
<div class="a" style="left:688px;top:152px;width:1144px;height:2px;background:#cdcdcd"></div>
<div class="a" style="left:688px;top:100px;width:232px;height:48px;background:#fff"></div>
<div class="a" style="left:688px;top:148px;width:232px;height:6px;background:#4083c9"></div>
<svg style="left:709px;top:111px;opacity:1.0" width="22" height="29" viewBox="0 0 22 29"><g fill="#c49a86"><circle cx="2.1" cy="15.3" r="1.4"/><circle cx="19.9" cy="15.3" r="1.4"/><circle cx="4.2" cy="27.3" r="1.5"/><circle cx="17.8" cy="27.3" r="1.5"/></g><circle cx="2.4" cy="4.8" r="1.9" fill="#78b9e2"/><circle cx="19.6" cy="4.8" r="1.9" fill="#78b9e2"/><path d="M2.4 6.5C2.4 2.5 6 0.9 11 0.9S19.6 2.5 19.6 6.5V20.5C19.6 26 16 28.7 11 28.7S2.4 26 2.4 20.5z" fill="#78b9e2"/><circle cx="7" cy="9" r="3" fill="#fff"/><circle cx="14.6" cy="9" r="3" fill="#fff"/><circle cx="7.6" cy="9.1" r="1.45" fill="#000"/><circle cx="14.1" cy="9.1" r="1.45" fill="#000"/><ellipse cx="11" cy="12.6" rx="1.9" ry="1.5" fill="#d7b7a6"/><ellipse cx="11" cy="11.9" rx="1.3" ry="1" fill="#1e1e1e"/><rect x="10" y="13.4" width="2" height="1.8" fill="#fff"/></svg>
<div class="a ui" style="left:744px;top:111px;font-size:24px;line-height:30px;color:#000;letter-spacing:0.3px">gen_dao.go</div>
<svg style="left:888px;top:118px" width="16" height="16" viewBox="0 0 16 16"><path d="M1 1l14 14M15 1L1 15" stroke="#bec3c7" stroke-width="2.2"/></svg>
<div class="a" style="left:688px;top:154px;width:1144px;height:1378px;background:#fff;overflow:hidden">
<div class="a" style="left:0;top:0;width:141px;height:1379px;background:#f2f2f2"></div>
<div class="a" style="left:0;top:910px;width:1144px;height:48px;background:#fcfaed"></div>
<div class="a" style="left:140px;top:0;width:2px;height:1379px;background:#d6d6d6"></div>
<div class="a code" style="left:-142px;top:-1px;width:200px;text-align:right;color:#a3a3a3;transform:scaleX(0.88);transform-origin:100% 50%">1</div>
<div class="a code" style="left:154px;top:-1px;color:#000"><span class="kw">package</span> <span class="pkg">gen</span></div>
<div class="a code" style="left:-142px;top:47px;width:200px;text-align:right;color:#a3a3a3;transform:scaleX(0.88);transform-origin:100% 50%">2</div>
<div class="a code" style="left:-142px;top:95px;width:200px;text-align:right;color:#a3a3a3;transform:scaleX(0.88);transform-origin:100% 50%">3</div>
<div class="a code" style="left:154px;top:95px;color:#000"><span class="kw">import</span> (</div>
<div class="a code" style="left:-142px;top:143px;width:200px;text-align:right;color:#a3a3a3;transform:scaleX(0.88);transform-origin:100% 50%">4</div>
<div class="a code" style="left:154px;top:143px;color:#000">    <span class="str">&quot;bytes&quot;</span></div>
<div class="a code" style="left:-142px;top:191px;width:200px;text-align:right;color:#a3a3a3;transform:scaleX(0.88);transform-origin:100% 50%">5</div>
<div class="a code" style="left:154px;top:191px;color:#000">    <span class="str">&quot;fmt&quot;</span></div>
<div class="a code" style="left:-142px;top:239px;width:200px;text-align:right;color:#a3a3a3;transform:scaleX(0.88);transform-origin:100% 50%">6</div>
<div class="a code" style="left:154px;top:239px;color:#000">    <span class="str">&quot;github.com/gogf/gf-cli/library/mlog&quot;</span></div>
<div class="a code" style="left:-142px;top:287px;width:200px;text-align:right;color:#a3a3a3;transform:scaleX(0.88);transform-origin:100% 50%">7</div>
<div class="a code" style="left:154px;top:287px;color:#000">    <span class="str">&quot;github.com/gogf/gf/database/gdb&quot;</span></div>
<div class="a code" style="left:-142px;top:335px;width:200px;text-align:right;color:#a3a3a3;transform:scaleX(0.88);transform-origin:100% 50%">8</div>
<div class="a code" style="left:154px;top:335px;color:#000">    <span class="str">&quot;github.com/gogf/gf/frame/g&quot;</span></div>
<div class="a code" style="left:-142px;top:383px;width:200px;text-align:right;color:#a3a3a3;transform:scaleX(0.88);transform-origin:100% 50%">9</div>
<div class="a code" style="left:154px;top:383px;color:#000">    <span class="str">&quot;github.com/gogf/gf/os/gcmd&quot;</span></div>
<div class="a code" style="left:-142px;top:431px;width:200px;text-align:right;color:#a3a3a3;transform:scaleX(0.88);transform-origin:100% 50%">10</div>
<div class="a code" style="left:154px;top:431px;color:#000">    <span class="str">&quot;github.com/gogf/gf/os/gfile&quot;</span></div>
<div class="a code" style="left:-142px;top:479px;width:200px;text-align:right;color:#a3a3a3;transform:scaleX(0.88);transform-origin:100% 50%">11</div>
<div class="a code" style="left:154px;top:479px;color:#000">    <span class="str">&quot;github.com/gogf/gf/os/gtime&quot;</span></div>
<div class="a code" style="left:-142px;top:527px;width:200px;text-align:right;color:#a3a3a3;transform:scaleX(0.88);transform-origin:100% 50%">12</div>
<div class="a code" style="left:154px;top:527px;color:#000">    <span class="str">&quot;github.com/gogf/gf/text/gregex&quot;</span></div>
<div class="a code" style="left:-142px;top:575px;width:200px;text-align:right;color:#a3a3a3;transform:scaleX(0.88);transform-origin:100% 50%">13</div>
<div class="a code" style="left:154px;top:575px;color:#000">    <span class="str">&quot;github.com/gogf/gf/text/gstr&quot;</span></div>
<div class="a code" style="left:-142px;top:623px;width:200px;text-align:right;color:#a3a3a3;transform:scaleX(0.88);transform-origin:100% 50%">14</div>
<div class="a code" style="left:154px;top:623px;color:#000">    <span class="str">&quot;github.com/olekukonko/tablewriter&quot;</span></div>
<div class="a code" style="left:-142px;top:671px;width:200px;text-align:right;color:#a3a3a3;transform:scaleX(0.88);transform-origin:100% 50%">15</div>
<div class="a code" style="left:154px;top:671px;color:#000">    <span class="str">&quot;strings&quot;</span></div>
<div class="a code" style="left:-142px;top:719px;width:200px;text-align:right;color:#a3a3a3;transform:scaleX(0.88);transform-origin:100% 50%">16</div>
<div class="a code" style="left:-142px;top:767px;width:200px;text-align:right;color:#a3a3a3;transform:scaleX(0.88);transform-origin:100% 50%">17</div>
<div class="a code" style="left:154px;top:767px;color:#000">    <span class="pkg">_</span> <span class="str">&quot;github.com/denisenkom/go-mssqldb&quot;</span></div>
<div class="a code" style="left:-142px;top:815px;width:200px;text-align:right;color:#a3a3a3;transform:scaleX(0.88);transform-origin:100% 50%">18</div>
<div class="a code" style="left:154px;top:815px;color:#000">    <span class="pkg">_</span> <span class="str">&quot;github.com/lib/pq&quot;</span></div>
<div class="a code" style="left:-142px;top:863px;width:200px;text-align:right;color:#a3a3a3;transform:scaleX(0.88);transform-origin:100% 50%">19</div>
<div class="a code" style="left:154px;top:863px;color:#000">    <span class="cm">//_ &quot;github.com/mattn/go-oci8&quot;</span></div>
<div class="a code" style="left:-142px;top:911px;width:200px;text-align:right;color:#a3a3a3;transform:scaleX(0.88);transform-origin:100% 50%">20</div>
<div class="a code" style="left:154px;top:911px;color:#000">    <span class="cm">//_ &quot;github.com/mattn/go-sqlite3&quot;</span></div>
<div class="a code" style="left:-142px;top:959px;width:200px;text-align:right;color:#a3a3a3;transform:scaleX(0.88);transform-origin:100% 50%">21</div>
<div class="a code" style="left:154px;top:959px;color:#000">)</div>
<div class="a code" style="left:-142px;top:1007px;width:200px;text-align:right;color:#a3a3a3;transform:scaleX(0.88);transform-origin:100% 50%">22</div>
<div class="a code" style="left:-142px;top:1055px;width:200px;text-align:right;color:#a3a3a3;transform:scaleX(0.88);transform-origin:100% 50%">23</div>
<div class="a code" style="left:154px;top:1055px;color:#000"><span class="kw">const</span> (</div>
<div class="a code" style="left:-142px;top:1103px;width:200px;text-align:right;color:#a3a3a3;transform:scaleX(0.88);transform-origin:100% 50%">24</div>
<div class="a code" style="left:154px;top:1103px;color:#000">    <span class="cn">genDaoDefaultPath</span>          = <span class="str">&quot;./app&quot;</span></div>
<div class="a code" style="left:-142px;top:1151px;width:200px;text-align:right;color:#a3a3a3;transform:scaleX(0.88);transform-origin:100% 50%">25</div>
<div class="a code" style="left:154px;top:1151px;color:#000">    <span class="cn">nodeNameGenDaoInConfigFile</span> = <span class="str">&quot;gfcli.gen.dao&quot;</span></div>
<div class="a code" style="left:-142px;top:1199px;width:200px;text-align:right;color:#a3a3a3;transform:scaleX(0.88);transform-origin:100% 50%">26</div>
<div class="a code" style="left:154px;top:1199px;color:#000">)</div>
<div class="a code" style="left:-142px;top:1247px;width:200px;text-align:right;color:#a3a3a3;transform:scaleX(0.88);transform-origin:100% 50%">27</div>
<div class="a code" style="left:-142px;top:1295px;width:200px;text-align:right;color:#a3a3a3;transform:scaleX(0.88);transform-origin:100% 50%">28</div>
<div class="a code" style="left:154px;top:1295px;color:#000"><span class="cm">// </span><span class="cm" style="color:#5e5e5e">doGenDao</span><span class="cm"> implements the &quot;gen dao&quot; command.</span></div>
<div class="a code" style="left:-142px;top:1343px;width:200px;text-align:right;color:#a3a3a3;transform:scaleX(0.88);transform-origin:100% 50%">29</div>
<div class="a code" style="left:154px;top:1343px;color:#000"><span class="kw">func</span> <span class="fn">doGenDao</span>(parser *<span class="pkg">gcmd</span>.<span class="ty">Parser</span>) {</div>
<svg style="left:131px;top:108px" width="20" height="26" viewBox="0 0 20 26"><path d="M1 1h18v15l-9 9-9-9z" fill="#fff" stroke="#c9c9c9" stroke-width="1.6"/><path d="M5.5 9.5h9" stroke="#c9c9c9" stroke-width="1.6"/></svg>
<svg style="left:131px;top:876px" width="20" height="26" viewBox="0 0 20 26"><path d="M1 1h18v15l-9 9-9-9z" fill="#fff" stroke="#c9c9c9" stroke-width="1.6"/><path d="M5.5 9.5h9" stroke="#c9c9c9" stroke-width="1.6"/></svg>
<svg style="left:131px;top:920px" width="20" height="26" viewBox="0 0 20 26"><path d="M1 25h18V10L10 1 1 10z" fill="#fff" stroke="#c9c9c9" stroke-width="1.6"/><path d="M5.5 16.5h9" stroke="#c9c9c9" stroke-width="1.6"/></svg>
<svg style="left:131px;top:968px" width="20" height="26" viewBox="0 0 20 26"><path d="M1 25h18V10L10 1 1 10z" fill="#fff" stroke="#c9c9c9" stroke-width="1.6"/><path d="M5.5 16.5h9" stroke="#c9c9c9" stroke-width="1.6"/></svg>
<svg style="left:131px;top:1068px" width="20" height="26" viewBox="0 0 20 26"><path d="M1 1h18v15l-9 9-9-9z" fill="#fff" stroke="#c9c9c9" stroke-width="1.6"/><path d="M5.5 9.5h9" stroke="#c9c9c9" stroke-width="1.6"/></svg>
<svg style="left:131px;top:1208px" width="20" height="26" viewBox="0 0 20 26"><path d="M1 25h18V10L10 1 1 10z" fill="#fff" stroke="#c9c9c9" stroke-width="1.6"/><path d="M5.5 16.5h9" stroke="#c9c9c9" stroke-width="1.6"/></svg>
<svg style="left:131px;top:1356px" width="20" height="26" viewBox="0 0 20 26"><path d="M1 1h18v15l-9 9-9-9z" fill="#fff" stroke="#c9c9c9" stroke-width="1.6"/><path d="M5.5 9.5h9" stroke="#c9c9c9" stroke-width="1.6"/></svg>
<div class="a" style="left:819px;top:914px;width:4px;height:40px;background:#000"></div>
<svg style="left:514px;top:898px" width="90" height="5" viewBox="0 0 90 5"><path d="M0 4 l5 -4 l5 4 l5 -4 l5 4 l5 -4 l5 4 l5 -4 l5 4 l5 -4 l5 4 l5 -4 l5 4 l5 -4 l5 4 l5 -4 l5 4 l5 -4 l5 4" stroke="#a0d2a0" stroke-width="1.4" fill="none"/></svg>
<svg style="left:514px;top:946px" width="90" height="5" viewBox="0 0 90 5"><path d="M0 4 l5 -4 l5 4 l5 -4 l5 4 l5 -4 l5 4 l5 -4 l5 4 l5 -4 l5 4 l5 -4 l5 4 l5 -4 l5 4 l5 -4 l5 4 l5 -4 l5 4" stroke="#a0d2a0" stroke-width="1.4" fill="none"/></svg>
<svg style="left:766px;top:1186px" width="90" height="5" viewBox="0 0 90 5"><path d="M0 4 l5 -4 l5 4 l5 -4 l5 4 l5 -4 l5 4 l5 -4 l5 4 l5 -4 l5 4 l5 -4 l5 4 l5 -4 l5 4 l5 -4 l5 4 l5 -4 l5 4" stroke="#a0d2a0" stroke-width="1.4" fill="none"/></svg>
</div>
<div class="a" style="left:688px;top:1532px;width:1144px;height:2px;background:#dcdcdc"></div>
<div class="a" style="left:0;top:1576px;width:1832px;height:2px;background:#c4c4c4"></div>
<svg style="left:0;top:0" width="1832" height="1580" viewBox="0 0 1832 1580"><path d="M758.3 909.5 Q755.5 903 762.5 900.3 L871.6 970.9 L876.5 957.1 L894.7 1001.8 L846.6 997.9 L858.4 989.5 Z" fill="#ee5024"/></svg>
<div class="a" style="left:899px;top:1009px;width:646px;height:122px;border:6px solid #e8402a;border-radius:12px"></div>
</body></html>
